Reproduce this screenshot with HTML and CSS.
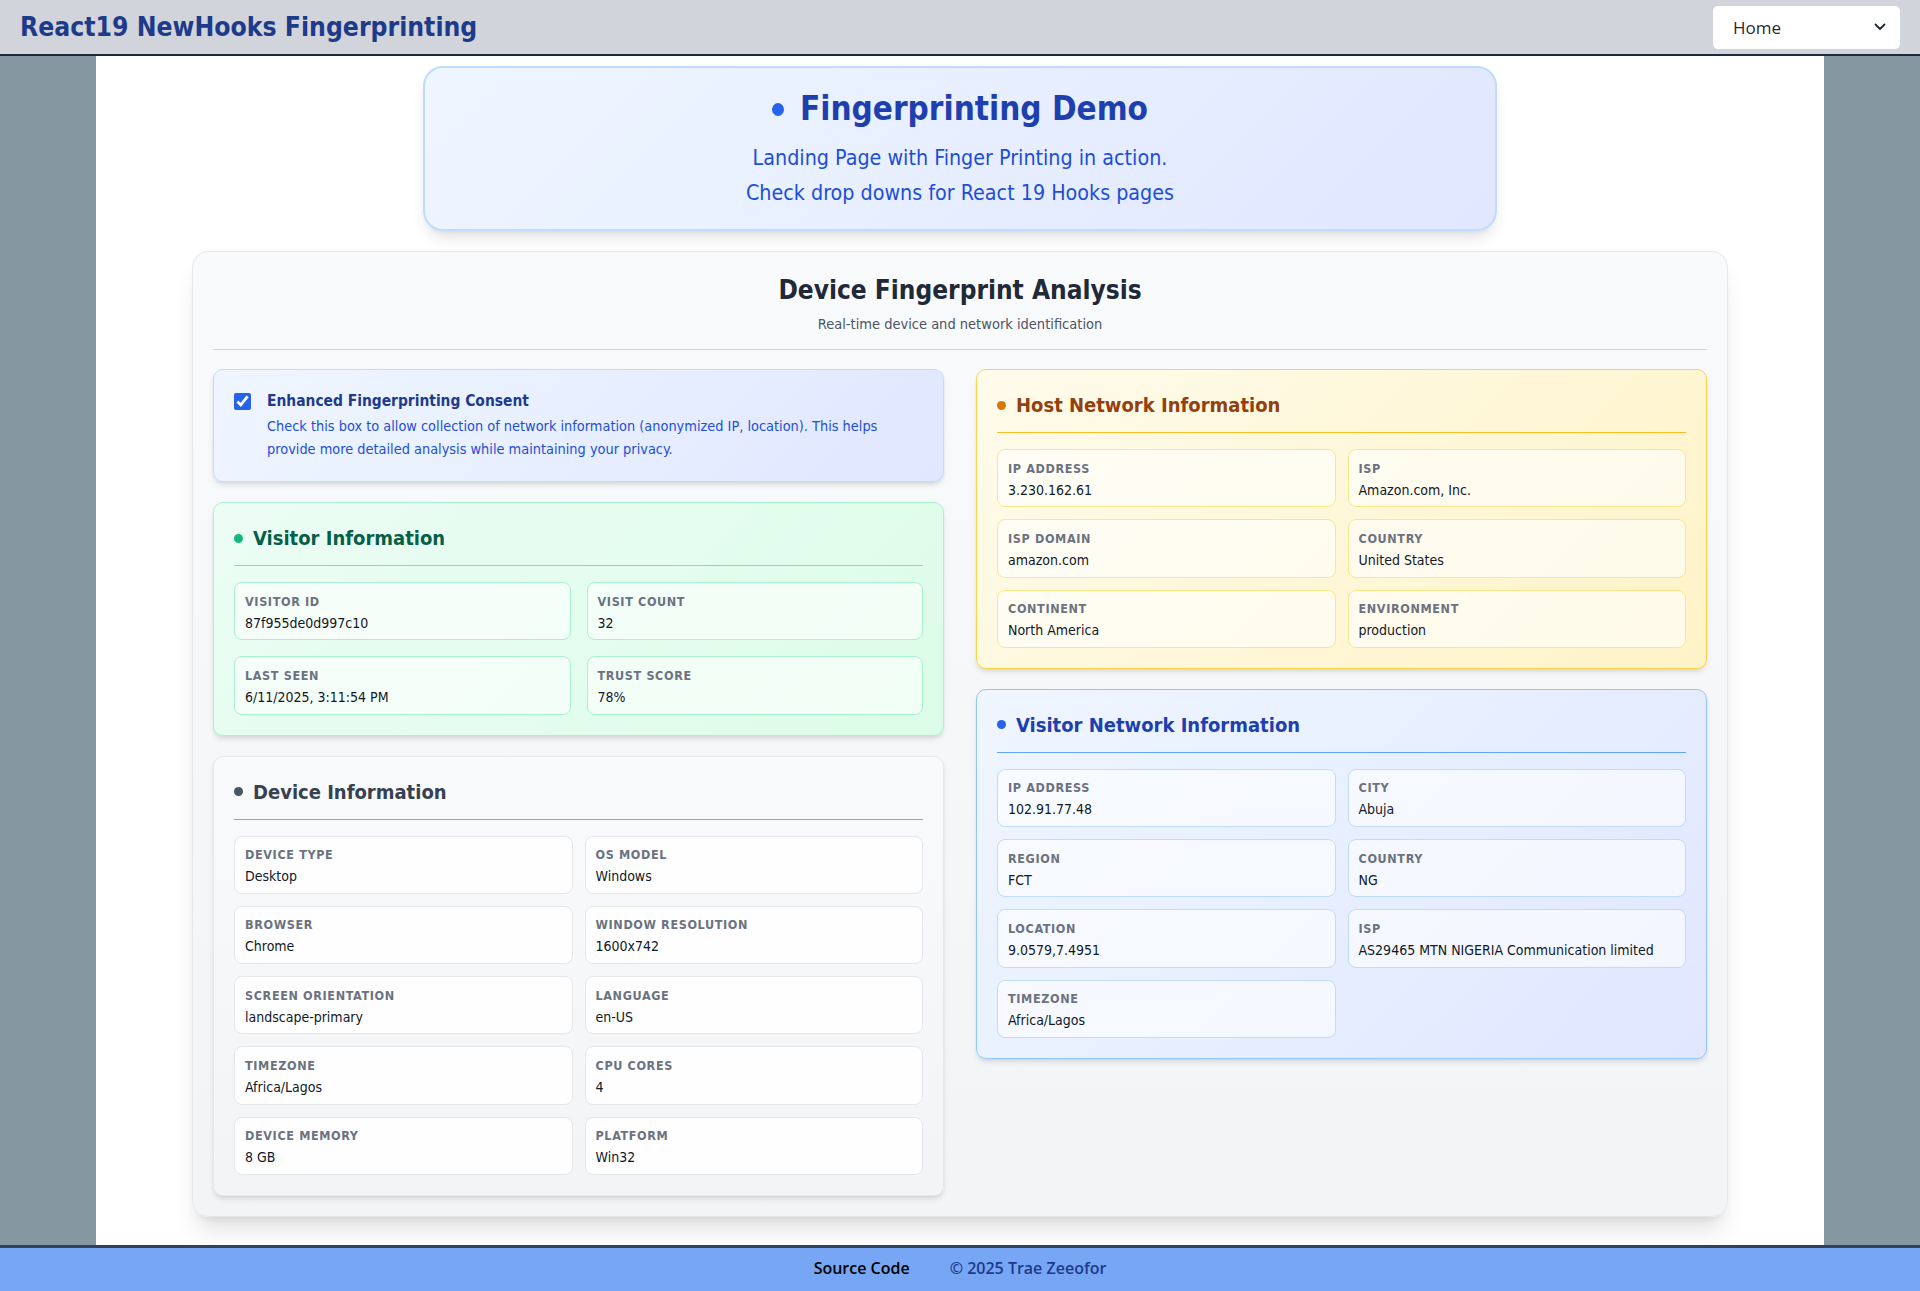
FILE: index.html
```html
<!DOCTYPE html>
<html lang="en">
<head>
<meta charset="utf-8">
<title>React19 NewHooks Fingerprinting</title>
<link rel="stylesheet" href="styles.css">
</head>
<body>
<header class="topbar">
  <h1 class="brand">React19 NewHooks Fingerprinting</h1>
  <div class="select">
    <span>Home</span>
    <svg class="chev" width="12" height="8" viewBox="0 0 12 8"><path d="M1.5 1.5 L6 6 L10.5 1.5" fill="none" stroke="#1f2937" stroke-width="1.8" stroke-linecap="round" stroke-linejoin="round"/></svg>
  </div>
</header>

<main class="page">
  <section class="hero">
    <h2 class="hero-title"><span class="hero-dot"></span>Fingerprinting Demo</h2>
    <p class="hero-line">Landing Page with Finger Printing in action.</p>
    <p class="hero-line">Check drop downs for React 19 Hooks pages</p>
  </section>

  <section class="analysis">
    <div class="analysis-head">
      <h2 class="analysis-title">Device Fingerprint Analysis</h2>
      <p class="analysis-sub">Real-time device and network identification</p>
    </div>

    <div class="cols">
      <div class="col">
        <div class="consent">
          <input class="consent-check" type="checkbox" checked>
          <div class="consent-text">
            <div class="consent-title">Enhanced Fingerprinting Consent</div>
            <p class="consent-desc">Check this box to allow collection of network information (anonymized IP, location). This helps provide more detailed analysis while maintaining your privacy.</p>
          </div>
        </div>

        <div class="panel panel-green">
          <h3 class="panel-title"><span class="dot"></span>Visitor Information</h3>
          <div class="grid grid-wide">
            <div class="field"><div class="label">Visitor ID</div><div class="value">87f955de0d997c10</div></div>
            <div class="field"><div class="label">Visit Count</div><div class="value">32</div></div>
            <div class="field"><div class="label">Last Seen</div><div class="value">6/11/2025, 3:11:54 PM</div></div>
            <div class="field"><div class="label">Trust Score</div><div class="value">78%</div></div>
          </div>
        </div>

        <div class="panel panel-gray">
          <h3 class="panel-title"><span class="dot"></span>Device Information</h3>
          <div class="grid">
            <div class="field"><div class="label">Device Type</div><div class="value">Desktop</div></div>
            <div class="field"><div class="label">OS Model</div><div class="value">Windows</div></div>
            <div class="field"><div class="label">Browser</div><div class="value">Chrome</div></div>
            <div class="field"><div class="label">Window Resolution</div><div class="value">1600x742</div></div>
            <div class="field"><div class="label">Screen Orientation</div><div class="value">landscape-primary</div></div>
            <div class="field"><div class="label">Language</div><div class="value">en-US</div></div>
            <div class="field"><div class="label">Timezone</div><div class="value">Africa/Lagos</div></div>
            <div class="field"><div class="label">CPU Cores</div><div class="value">4</div></div>
            <div class="field"><div class="label">Device Memory</div><div class="value">8 GB</div></div>
            <div class="field"><div class="label">Platform</div><div class="value">Win32</div></div>
          </div>
        </div>
      </div>

      <div class="col">
        <div class="panel panel-amber">
          <h3 class="panel-title"><span class="dot"></span>Host Network Information</h3>
          <div class="grid">
            <div class="field"><div class="label">IP Address</div><div class="value">3.230.162.61</div></div>
            <div class="field"><div class="label">ISP</div><div class="value">Amazon.com, Inc.</div></div>
            <div class="field"><div class="label">ISP Domain</div><div class="value">amazon.com</div></div>
            <div class="field"><div class="label">Country</div><div class="value">United States</div></div>
            <div class="field"><div class="label">Continent</div><div class="value">North America</div></div>
            <div class="field"><div class="label">Environment</div><div class="value">production</div></div>
          </div>
        </div>

        <div class="panel panel-blue">
          <h3 class="panel-title"><span class="dot"></span>Visitor Network Information</h3>
          <div class="grid">
            <div class="field"><div class="label">IP Address</div><div class="value">102.91.77.48</div></div>
            <div class="field"><div class="label">City</div><div class="value">Abuja</div></div>
            <div class="field"><div class="label">Region</div><div class="value">FCT</div></div>
            <div class="field"><div class="label">Country</div><div class="value">NG</div></div>
            <div class="field"><div class="label">Location</div><div class="value">9.0579,7.4951</div></div>
            <div class="field"><div class="label">ISP</div><div class="value">AS29465 MTN NIGERIA Communication limited</div></div>
            <div class="field"><div class="label">Timezone</div><div class="value">Africa/Lagos</div></div>
          </div>
        </div>
      </div>
    </div>
  </section>
</main>

<footer class="footer">
  <span class="foot-link">Source Code</span>
  <span class="foot-copy">© 2025 Trae Zeeofor</span>
</footer>
</body>
</html>
```

FILE: styles.css
```css
* { box-sizing: border-box; }

html, body { margin: 0; padding: 0; }

body {
  background: #8598a2;
  font-family: "DejaVu Sans Condensed", "DejaVu Sans", sans-serif;
  font-stretch: condensed;
  color: #111827;
}

/* ---------- top bar ---------- */
.topbar {
  height: 56px;
  background: #d1d5db;
  border-bottom: 2px solid #1f2937;
  display: flex;
  align-items: center;
  justify-content: space-between;
  padding: 0 20px;
}

.brand {
  margin: 0;
  font-size: 26.3px;
  font-weight: 700;
  color: #1e3a8a;
  line-height: 32px;
}

.select {
  width: 187px;
  height: 43px;
  background: #ffffff;
  border-radius: 5px;
  display: flex;
  align-items: center;
  justify-content: space-between;
  padding: 0 14px 0 20px;
  font-family: "Open Sans", "Noto Sans", sans-serif;
  font-stretch: normal;
  font-size: 17px;
  color: #1f2937;
}

.chev { display: block; }

/* ---------- page ---------- */
.page {
  width: 90%;
  margin: 0 auto;
  background: #ffffff;
  padding: 10px 0 28px;
}

.hero {
  max-width: 1074px;
  margin: 0 auto;
  padding: 21px 24px 19px;
  border: 2px solid #bfdbfe;
  border-radius: 20px;
  background: linear-gradient(135deg, #eff6ff 0%, #e0e7ff 100%);
  box-shadow: 0 10px 15px -3px rgba(0,0,0,0.1), 0 4px 6px -4px rgba(0,0,0,0.1);
  text-align: center;
}

.hero-title {
  margin: 0 0 11px;
  font-size: 33px;
  line-height: 40px;
  font-weight: 700;
  color: #1e40af;
  display: flex;
  align-items: center;
  justify-content: center;
}

.hero-dot {
  width: 12px;
  height: 13px;
  border-radius: 50%;
  background: #2563eb;
  margin-right: 16px;
}

.hero-line {
  margin: 0;
  font-size: 21.3px;
  line-height: 35px;
  color: #1d4ed8;
}

/* ---------- analysis card ---------- */
.analysis {
  max-width: 1536px;
  margin: 20px auto 0;
  padding: 20px;
  border: 1px solid #e5e7eb;
  border-radius: 16px;
  background: linear-gradient(180deg, #f9fafb 0%, #f3f4f6 100%);
  box-shadow: 0 20px 25px -5px rgba(0,0,0,0.1), 0 8px 10px -6px rgba(0,0,0,0.1);
}

.analysis-head {
  text-align: center;
  padding-bottom: 15px;
  border-bottom: 1px solid #d1d5db;
  margin-bottom: 19px;
}

.analysis-title {
  margin: 0;
  font-size: 26px;
  line-height: 36px;
  font-weight: 700;
  color: #1f2937;
}

.analysis-sub {
  margin: 6px 0 0;
  font-size: 14.5px;
  line-height: 20px;
  color: #4b5563;
}

.cols {
  display: grid;
  grid-template-columns: 1fr 1fr;
  gap: 32px;
  align-items: start;
}

.col {
  display: flex;
  flex-direction: column;
  gap: 20px;
}

/* ---------- consent ---------- */
.consent {
  display: flex;
  align-items: flex-start;
  gap: 16px;
  padding: 20px;
  border: 1px solid #bfdbfe;
  border-radius: 10px;
  background: linear-gradient(135deg, #eff6ff 0%, #e0e7ff 100%);
  box-shadow: 0 4px 6px -1px rgba(0,0,0,0.1), 0 2px 4px -2px rgba(0,0,0,0.1);
}

.consent-check {
  width: 17px;
  height: 17px;
  margin: 3px 0 0;
  accent-color: #2563eb;
  flex: none;
}

.consent-title {
  font-size: 15.4px;
  line-height: 22px;
  font-weight: 700;
  color: #1e3a8a;
}

.consent-desc {
  margin: 3px 0 0;
  font-size: 14.4px;
  line-height: 23px;
  color: #1d4ed8;
}

/* ---------- panels ---------- */
.panel {
  padding: 20px;
  border: 1px solid #e5e7eb;
  border-radius: 10px;
  box-shadow: 0 4px 6px -1px rgba(0,0,0,0.1), 0 2px 4px -2px rgba(0,0,0,0.1);
}

.panel-title {
  margin: 0 0 16px;
  padding-bottom: 12px;
  border-bottom: 1px solid #9ca3af;
  display: flex;
  align-items: center;
  font-size: 20px;
  line-height: 30px;
  font-weight: 700;
}

.dot {
  width: 9px;
  height: 9px;
  border-radius: 50%;
  margin-right: 10px;
  flex: none;
}

.grid {
  display: grid;
  grid-template-columns: 1fr 1fr;
  gap: 12px;
}

.grid-wide { gap: 16px; }

.field {
  padding: 9.5px 10px 6.75px;
  border: 1px solid #e5e7eb;
  border-radius: 8px;
  background: rgba(255,255,255,0.7);
}

.label {
  font-size: 12.5px;
  line-height: 18px;
  font-weight: 700;
  letter-spacing: 0.05em;
  text-transform: uppercase;
  color: #6b7280;
  margin-bottom: 2px;
}

.value {
  font-size: 14px;
  line-height: 20px;
  color: #111827;
}

.panel-green {
  background: linear-gradient(135deg, #ecfdf5 0%, #dcfce7 100%);
  border-color: #a7f3d0;
}
.panel-green .panel-title { color: #065f46; border-bottom-color: #6ee7b7; }
.panel-green .dot { background: #10b981; }
.panel-green .field { border-color: #a7f3d0; background: rgba(255,255,255,0.6); }

.panel-gray {
  background: linear-gradient(180deg, #f9fafb 0%, #f3f4f6 100%);
  border-color: #e5e7eb;
}
.panel-gray .panel-title { color: #374151; border-bottom-color: #9ca3af; }
.panel-gray .dot { background: #4b5563; }
.panel-gray .field { border-color: #e5e7eb; background: rgba(255,255,255,0.85); }

.panel-amber {
  background: linear-gradient(135deg, #fffbeb 0%, #fef3c7 100%);
  border-color: #fcd34d;
}
.panel-amber .panel-title { color: #92400e; border-bottom-color: #fbbf24; }
.panel-amber .dot { background: #d97706; }
.panel-amber .field { border-color: #fde68a; background: rgba(255,255,255,0.6); }

.panel-blue {
  background: linear-gradient(135deg, #eff6ff 0%, #e0e7ff 100%);
  border-color: #93c5fd;
}
.panel-blue .panel-title { color: #1e40af; border-bottom-color: #60a5fa; }
.panel-blue .dot { background: #2563eb; }
.panel-blue .field { border-color: #bfdbfe; background: rgba(255,255,255,0.6); }

/* ---------- footer ---------- */
.footer {
  border-top: 3px solid #334155;
  background: #76a6f4;
  padding: 10px 0 14px;
  display: flex;
  justify-content: center;
  gap: 40px;
  font-family: "Open Sans", "Noto Sans", sans-serif;
  font-stretch: normal;
  font-size: 16px;
  line-height: 20px;
  font-weight: 600;
}

.foot-link { color: #000000; }
.foot-copy { color: #1e3a8a; }
```
